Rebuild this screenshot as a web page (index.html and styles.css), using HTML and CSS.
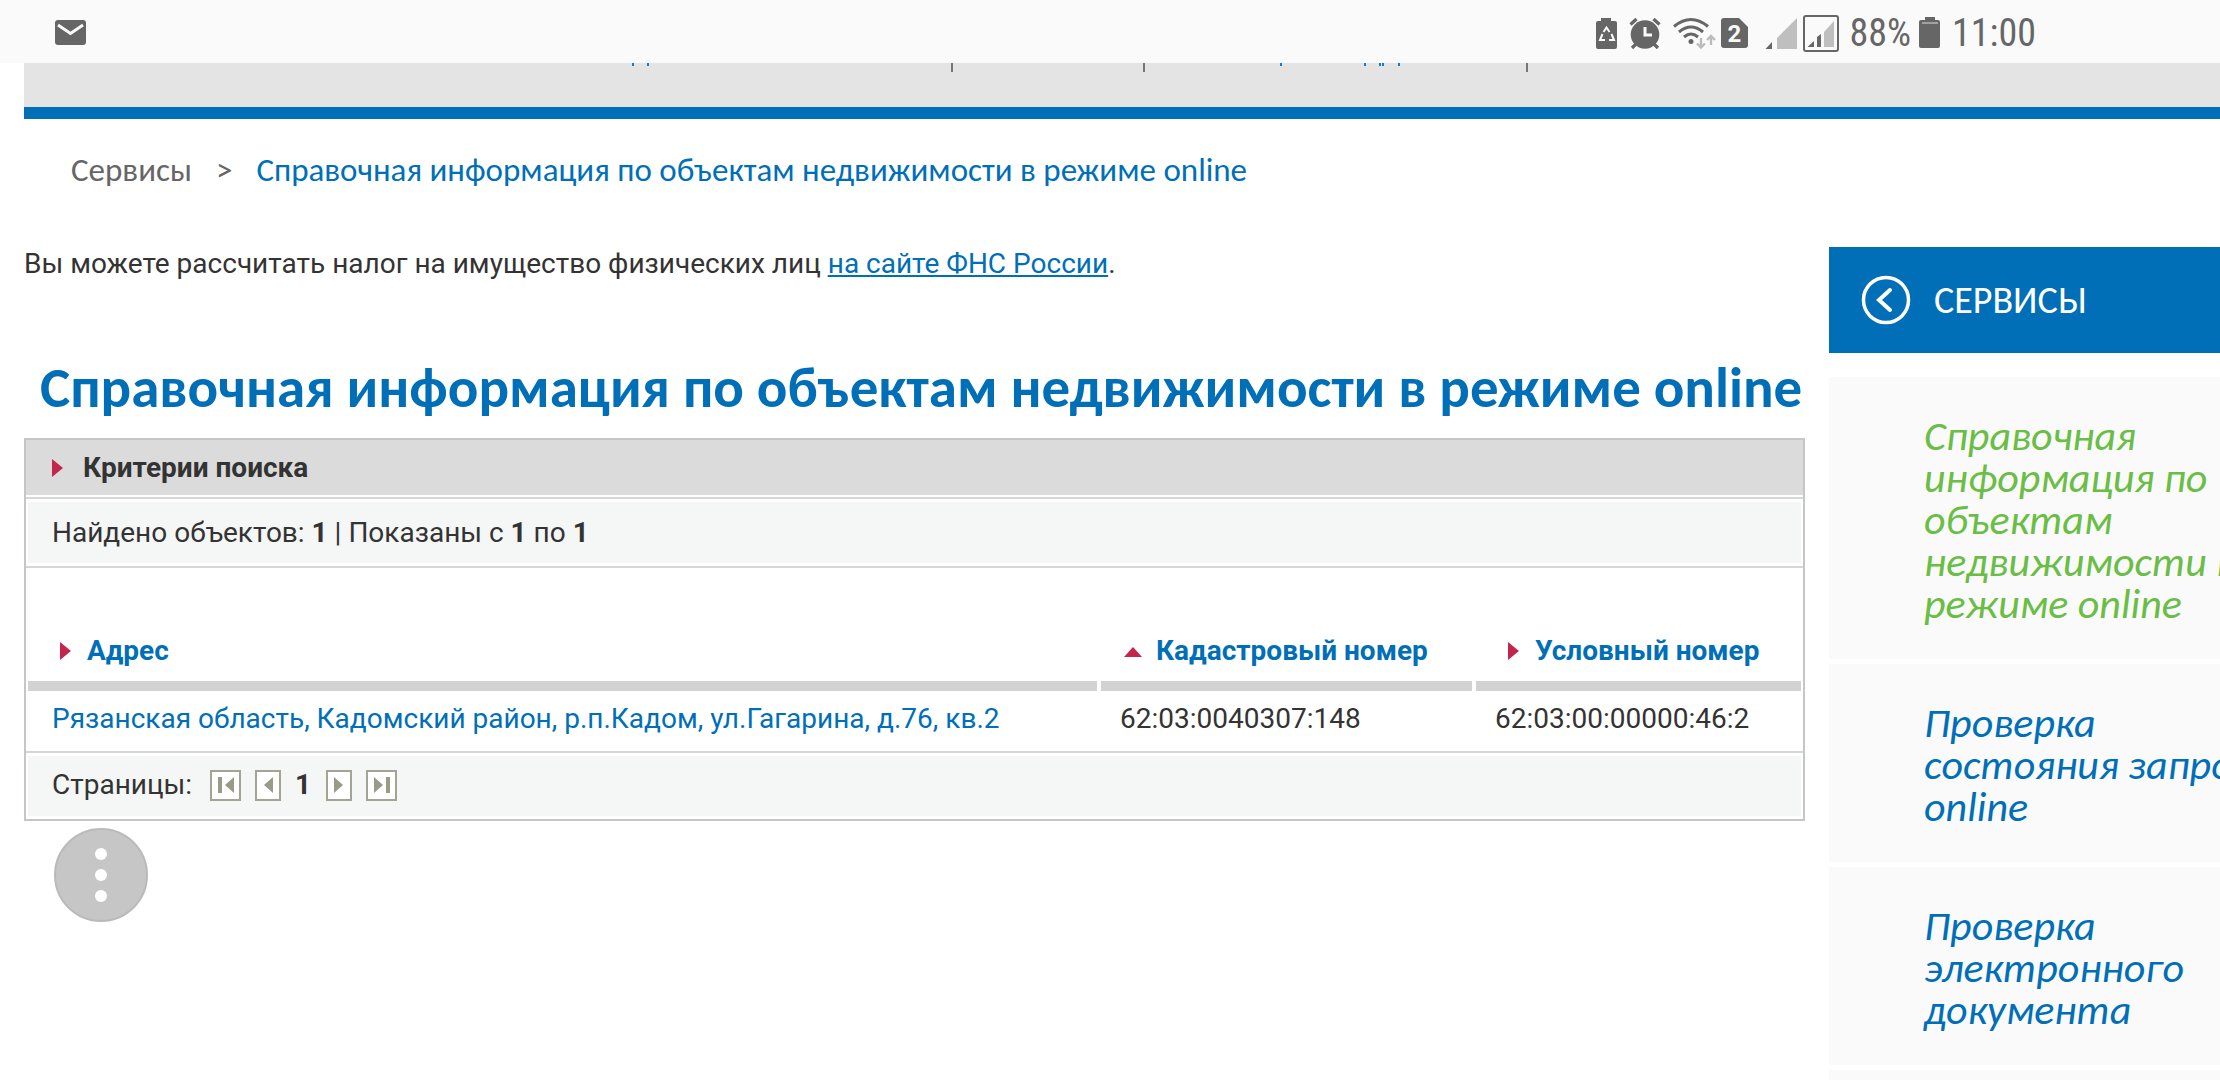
FILE: index.html
```html
<!DOCTYPE html>
<html lang="ru">
<head>
<meta charset="utf-8">
<title>Справочная информация по объектам недвижимости в режиме online</title>
<link rel="stylesheet" href="styles.css">
</head>
<body>
<header class="status">
  <svg class="mail" width="32" height="26" viewBox="0 0 32 26" role="img" aria-label="Почта"><rect width="31" height="25" rx="3" fill="#666"/><path d="M3 5l12.500 8.500 12.500-8.500" fill="none" stroke="#fafafa" stroke-width="3"/></svg>
  <div class="tray">
    <svg width="246" height="40" viewBox="1595 12 246 40" fill="#666" aria-hidden="true">
      <path d="M1598 20h3v-3h10v3h4q2 0 2 2v24q0 2-2 2h-17q-2 0-2-2v-24q0-2 2-2z"/>
      <path d="M1603.500 31l3-4.500 3 4.500M1611.500 33l2.500 6h-5M1605 39h-5l2.500-6" fill="none" stroke="#fafafa" stroke-width="2"/>
      <circle cx="1645" cy="33.500" r="14.300"/>
      <path d="M1630.500 23.500l6-5.500M1659.500 23.500l-6-5.500M1637 42l-5 5M1653 42l5 5" stroke="#666" stroke-width="3.200"/>
      <path d="M1645 26v8h7" fill="none" stroke="#fafafa" stroke-width="3"/>
      <g fill="none" stroke="#666" stroke-width="3"><path d="M1674 25.500q17-14 34 0M1679 31q12-10 24 0M1684 36q7-6 14 0"/></g>
      <circle cx="1691" cy="40.500" r="2.500"/>
      <path d="M1701 37v9M1697 42.500l4 4 4-4M1711 44v-9M1707 39l4-4 4 4" fill="none" stroke="#bbb" stroke-width="2.400"/>
      <path d="M1724 17h15l9 9v18q0 3-3 3h-21q-3 0-3-3v-24q0-3 3-3z"/>
      <text class="sim" x="1734.500" y="41" text-anchor="middle">2</text>
      <path d="M1777 37l20-20v31h-20z" fill="#bfbfbf"/><path d="M1772 41v7h-6.500z"/>
      <rect x="1804" y="15" width="34" height="35" rx="2" fill="none" stroke="#666" stroke-width="2"/>
      <path d="M1824 31l10-11v26h-10z" fill="#bfbfbf"/><path d="M1814 40v6h-6.500zM1817 36l4-3v13h-4z"/>
    </svg>
    <span class="percent">88%</span>
    <svg width="22" height="32" viewBox="0 0 22 32" fill="#666" aria-hidden="true"><path d="M2 3h4v-3h10v3h3q2 0 2 2v24q0 2-2 2h-17q-2 0-2-2v-24q0-2 2-2z"/><path d="M3 6h16" stroke="#ddd"/></svg>
    <time class="clock">11:00</time>
  </div>
</header>
<div class="strip">
  <svg width="1600" height="44" viewBox="24 63 1600 44" aria-hidden="true">
    <path d="M633 63v3M648 63v3M1281 63v3M1365 63v3M1380 63v3M1383 63v3M1399 63v3" stroke="#1a7dbf" stroke-width="2"/>
    <path d="M952 63v9M1144 63v9M1527 63v9" stroke="#777" stroke-width="2"/>
  </svg>
</div>
<nav class="crumbs"><a class="root" href="#">Сервисы</a><span class="root">&gt;</span><a href="#">Справочная информация по объектам недвижимости в режиме online</a></nav>
<div class="cols">
  <main>
    <p class="note">Вы можете рассчитать налог на имущество физических лиц <a href="#">на сайте ФНС России</a>.</p>
    <h1>Справочная информация по объектам недвижимости в режиме online</h1>
    <section class="results">
      <h2><svg class="right" width="11" height="18" viewBox="0 0 11 18"><path d="M0 0l11 9-11 9z"/></svg>Критерии поиска</h2>
      <div class="band found"><p>Найдено объектов: <b>1</b> | Показаны с <b>1</b> по <b>1</b></p></div>
      <table>
        <colgroup><col><col class="cadastral"><col class="relative"></colgroup>
        <thead><tr>
          <th scope="col"><a class="first" href="#"><svg class="right" width="11" height="18" viewBox="0 0 11 18"><path d="M0 0l11 9-11 9z"/></svg>Адрес</a></th>
          <th scope="col"><a class="sorted" href="#"><svg width="18" height="18" viewBox="0 0 18 18"><path d="M0 15l9-10 9 10z"/></svg>Кадастровый номер</a></th>
          <th scope="col"><a class="first" href="#"><svg class="right" width="11" height="18" viewBox="0 0 11 18"><path d="M0 0l11 9-11 9z"/></svg>Условный номер</a></th>
        </tr></thead>
        <tbody><tr>
          <td><a href="#">Рязанская область, Кадомский район, р.п.Кадом, ул.Гагарина, д.76, кв.2</a></td>
          <td>62:03:0040307:148</td>
          <td>62:03:00:00000:46:2</td>
        </tr></tbody>
      </table>
      <div class="band pages"><div class="pager">
        <span>Страницы:</span>
        <button class="edge" aria-label="Первая"><svg width="18" height="18" viewBox="0 0 18 18"><path d="M1 1h4v16h-4zM17 1v16l-9-8z"/></svg></button>
        <button aria-label="Предыдущая"><svg width="10" height="18" viewBox="0 0 10 18"><path d="M10 1v16l-9-8z"/></svg></button>
        <b>1</b>
        <button aria-label="Следующая"><svg width="10" height="18" viewBox="0 0 10 18"><path d="M0 1v16l9-8z"/></svg></button>
        <button class="edge" aria-label="Последняя"><svg width="18" height="18" viewBox="0 0 18 18"><path d="M13 1h4v16h-4zM1 1v16l9-8z"/></svg></button>
      </div></div>
    </section>
    <button class="more" aria-label="Меню"><svg width="94" height="94" viewBox="0 0 94 94"><circle cx="47" cy="47" r="46" fill="#c6c6c6" stroke="#bababa" stroke-width="2"/><g fill="#fff"><circle cx="47" cy="26" r="6"/><circle cx="47" cy="47" r="6"/><circle cx="47" cy="68" r="6"/></g></svg></button>
  </main>
  <aside>
    <a class="head" href="#"><svg width="50" height="50" viewBox="0 0 50 50" fill="none" stroke="#fff" stroke-linecap="round"><circle cx="25" cy="25" r="22.500" stroke-width="3.500"/><path d="M29 15l-11 10 11 10" stroke-width="4"/></svg>СЕРВИСЫ</a>
    <ul class="list">
      <li><a class="current" href="#">Справочная информация по объектам недвижимости в режиме online</a></li>
      <li><a href="#">Проверка состояния запроса online</a></li>
      <li><a href="#">Проверка электронного документа</a></li>
      <li></li>
    </ul>
  </aside>
</div>
</body>
</html>
```
FILE: styles.css
```css
* { box-sizing: border-box; }
html { height: 100%; overflow: hidden; }
body { margin: 0; height: 100%; overflow: hidden; background: #fff; color: #333; font: 28px/34px Roboto, sans-serif; }
p, h1, h2, ul { margin: 0; padding: 0; }
a { color: #006fb8; text-decoration: none; }
button { padding: 0; border: 0; background: none; font: inherit; }
svg { display: block; flex: none; }

.status { display: flex; justify-content: space-between; align-items: center; height: 63px; padding: 3px 184px 0 55px; background: #fafafa; }
.tray { display: flex; align-items: center; color: #666; font: 38px/40px "Roboto Condensed", "Liberation Sans Narrow", Roboto, sans-serif; }
.sim { fill: #fafafa; font: bold 24px Roboto, sans-serif; }
.percent { margin: 0 8px 0 9px; }
.clock { margin-left: 11px; }

.strip { margin-left: 24px; overflow: hidden; background: #e4e4e4; border-bottom: 12px solid #006fb8; }

.crumbs { display: flex; gap: 24px; padding: 31px 0 57px 71px; font: 33px/40px Carlito, Calibri, Lato, sans-serif; }
.root { color: #666; }

.cols { display: flex; gap: 24px; padding-left: 24px; }
main { flex: 1; min-width: 0; }
.note a { text-decoration: underline; }
h1 { margin: 77px 0 20px; padding-left: 16px; color: #006fb8; font: bold 57px/60px Carlito, Calibri, Lato, sans-serif; white-space: nowrap; }

.results { border: 2px solid #c6c6c6; }
h2 { display: flex; align-items: center; gap: 20px; height: 55px; padding-left: 26px; background: #dbdbdb; font-size: 28px; line-height: 34px; }
h2 svg, th svg { fill: #c4264b; }
.band { border: 0 solid #d6d6d6; padding: 3px 2px; }
.found { margin-top: 2px; border-width: 2px 0; }
.found p { padding: 14px 24px 13px; background: #f5f7f6; }
.pages { border-top-width: 2px; }
table { width: calc(100% + 4px); margin: 0 -2px; border-collapse: separate; border-spacing: 4px 0; table-layout: fixed; }
.cadastral { width: 371px; }
.relative { width: 325px; }
th { padding: 66px 0 13px; border-bottom: 10px solid #d2d2d2; text-align: left; }
th a { display: flex; align-items: center; }
.first { gap: 16px; padding-left: 32px; }
.sorted { gap: 14px; padding-left: 23px; }
td { padding: 11px 0 15px 19px; white-space: nowrap; }
td:first-child { padding-left: 24px; }
.pager { display: flex; align-items: center; height: 60px; padding: 0 0 2px 24px; background: #f5f7f6; }
.pager button { display: flex; align-items: center; justify-content: center; width: 26px; height: 31px; margin-left: 14px; border: 2px solid #a3a493; background: #fff; fill: #999a88; }
.pager .edge { width: 31px; }
.pager span { margin-right: 4px; }
.pager b { margin-left: 14px; margin-right: 1px; }
.more { margin: 7px 0 0 30px; }

aside { flex: 0 0 391px; min-width: 0; }
.head { display: flex; align-items: center; gap: 23px; height: 106px; margin-bottom: 24px; padding-left: 32px; background: #006fb8; color: #fff; font: 38px/46px Carlito, Calibri, Lato, sans-serif; }
.list { display: grid; gap: 5px; list-style: none; font: italic 42px/42px Carlito, Calibri, Lato, sans-serif; }
.list li { width: 460px; padding: 38px 0 34px 95px; background: #fafafa; }
.list li:empty { min-height: 10px; padding: 0; }
.list .current { color: #6abd45; }
```
